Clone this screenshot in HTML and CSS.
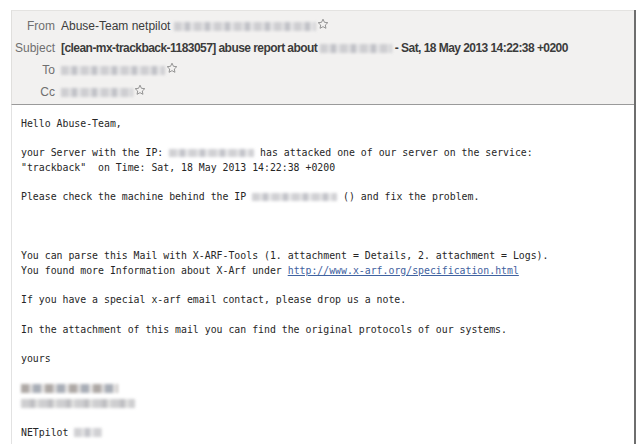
FILE: index.html
```html
<!DOCTYPE html>
<html lang="en">
<head>
<meta charset="utf-8">
<title>abuse report</title>
<link rel="stylesheet" href="styles.css">
</head>
<body>
<div class="page">
  <div class="message">
    <div class="headers">
      <div class="row">
        <span class="label">From</span>
        <span class="value">Abuse-Team netpilot <span class="blur w142"></span><svg class="star" viewBox="0 0 12 12"><path d="M6 1.2l1.45 3.1 3.35.4-2.5 2.3.65 3.3L6 8.65 3.05 10.3l.65-3.3-2.5-2.3 3.35-.4z"/></svg></span>
      </div>
      <div class="row">
        <span class="label">Subject</span>
        <span class="value bold">[clean-mx-trackback-1183057] abuse report about <span class="blur w72"></span> - Sat, 18 May 2013 14:22:38 +0200</span>
      </div>
      <div class="row">
        <span class="label">To</span>
        <span class="value"><span class="blur w104"></span><svg class="star" viewBox="0 0 12 12"><path d="M6 1.2l1.45 3.1 3.35.4-2.5 2.3.65 3.3L6 8.65 3.05 10.3l.65-3.3-2.5-2.3 3.35-.4z"/></svg></span>
      </div>
      <div class="row">
        <span class="label">Cc</span>
        <span class="value"><span class="blur w72"></span><svg class="star" viewBox="0 0 12 12"><path d="M6 1.2l1.45 3.1 3.35.4-2.5 2.3.65 3.3L6 8.65 3.05 10.3l.65-3.3-2.5-2.3 3.35-.4z"/></svg></span>
      </div>
    </div>
    <div class="body">
      <p>Hello Abuse-Team,</p>
      <p>your Server with the IP: <span class="blur ip"></span> has attacked one of our server on the service:<br>"trackback"  on Time: Sat, 18 May 2013 14:22:38 +0200</p>
      <p>Please check the machine behind the IP <span class="blur ip"></span> () and fix the problem.</p>
      <p class="gap">You can parse this Mail with X-ARF-Tools (1. attachment = Details, 2. attachment = Logs).<br>You found more Information about X-Arf under <a href="#">http://www.x-arf.org/specification.html</a></p>
      <p>If you have a special x-arf email contact, please drop us a note.</p>
      <p>In the attachment of this mail you can find the original protocols of our systems.</p>
      <p>yours</p>
      <p><span class="blur sig1"></span><br><span class="blur sig2"></span></p>
      <p>NETpilot <span class="blur w28"></span></p>
    </div>
  </div>
</div>
</body>
</html>
```

FILE: styles.css
```css
html, body {
  margin: 0;
  background: #ffffff;
  overflow: hidden;
}

.page {
  padding: 10px 0 0 11px;
}

.message {
  height: 434px;
  border-right: 2px solid #6e6e6e;
  display: flex;
  flex-direction: column;
}

.headers {
  background: #f2f1f0;
  border-top: 1px solid #e4e3e1;
  border-left: 1px solid #e0dfdd;
  border-bottom: 1px solid #9a9a9a;
  padding: 4px 0 1px;
  font-family: "Liberation Sans", Arial, sans-serif;
  font-size: 12px;
  color: #3c3c3c;
}

.row {
  display: flex;
  align-items: center;
  height: 22px;
  gap: 6px;
}

.label {
  width: 43px;
  text-align: right;
  color: #6f6f6f;
  flex: none;
}

.value {
  display: flex;
  align-items: center;
  white-space: pre;
}

.bold {
  font-weight: bold;
  letter-spacing: -0.55px;
}

.star {
  width: 12px;
  height: 12px;
  margin-left: 1px;
  margin-top: -4px;
  fill: none;
  stroke: #8a8a8a;
  stroke-width: 0.9;
  stroke-linejoin: round;
}

.blur {
  display: inline-block;
  height: 9px;
  vertical-align: middle;
  background: repeating-linear-gradient(90deg, #c8c8cc 0 7px, #dcdcde 7px 11px, #b8b9bf 11px 16px, #e2e2e4 16px 20px);
  filter: blur(1.4px);
  opacity: 0.85;
}

.w142 { width: 142px; }
.w104 { width: 104px; }
.w72 { width: 72px; }
.w28 { width: 28px; }

.body {
  flex: 1;
  border-left: 1px solid #e2e2e2;
  padding: 12px 0 0 9px;
  font-family: "DejaVu Sans Mono", monospace;
  font-size: 9.85px;
  line-height: 14.7px;
  color: #262626;
}

.body p {
  margin: 0 0 14.7px;
  white-space: pre;
}

.body p.gap {
  margin-top: 44.1px;
}

.body .blur.ip {
  width: 85px;
  height: 8px;
}

.body .blur.sig1 {
  width: 97px;
  height: 9px;
  background: repeating-linear-gradient(90deg, #a09a96 0 8px, #d4d2d3 8px 12px, #9aa0aa 12px 20px, #e0dedd 20px 24px);
}

.body .blur.sig2 {
  width: 114px;
  height: 9px;
  background: repeating-linear-gradient(90deg, #c6c6c8 0 9px, #b4b4b8 9px 14px, #dadada 14px 18px);
}

.body a {
  color: #3f62a0;
  text-decoration: underline;
}
```
